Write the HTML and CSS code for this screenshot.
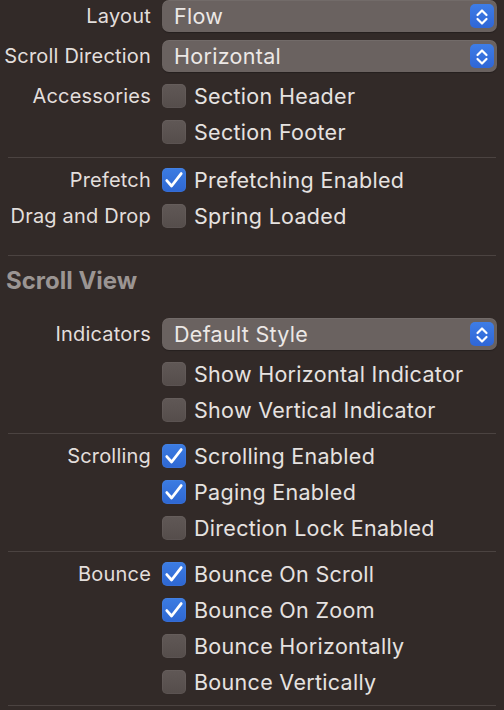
FILE: index.html
```html
<!DOCTYPE html>
<html>
<head>
<meta charset="utf-8">
<link rel="stylesheet" href="styles.css">
</head>
<body>
<div class="panel">
  <div class="row r-first">
    <div class="label">Layout</div>
    <div class="popup"><span class="popup-text">Flow</span><span class="stepper"><svg viewBox="0 0 24 24" width="24" height="24"><path d="M7.5 11 L12 6.5 L16.5 11 M7.5 15 L12 19.5 L16.5 15"/></svg></span></div>
  </div>
  <div class="row r-popup">
    <div class="label">Scroll Direction</div>
    <div class="popup"><span class="popup-text">Horizontal</span><span class="stepper"><svg viewBox="0 0 24 24" width="24" height="24"><path d="M7.5 11 L12 6.5 L16.5 11 M7.5 15 L12 19.5 L16.5 15"/></svg></span></div>
  </div>
  <div class="row r-cb">
    <div class="label">Accessories</div>
    <div class="check"><span class="box"></span><span>Section Header</span></div>
  </div>
  <div class="row r-cb">
    <div class="label"></div>
    <div class="check"><span class="box"></span><span>Section Footer</span></div>
  </div>
  <div class="sep s1"></div>
  <div class="row r-after-sep1">
    <div class="label">Prefetch</div>
    <div class="check"><span class="box on"><svg viewBox="0 0 24 24" width="24" height="24"><path d="M4.8 12.6 L9.6 18 L19.2 5.6"/></svg></span><span>Prefetching Enabled</span></div>
  </div>
  <div class="row r-cb">
    <div class="label">Drag and Drop</div>
    <div class="check"><span class="box"></span><span>Spring Loaded</span></div>
  </div>
  <div class="sep s2"></div>
  <div class="header">Scroll View</div>
  <div class="row r-after-header">
    <div class="label">Indicators</div>
    <div class="popup"><span class="popup-text">Default Style</span><span class="stepper"><svg viewBox="0 0 24 24" width="24" height="24"><path d="M7.5 11 L12 6.5 L16.5 11 M7.5 15 L12 19.5 L16.5 15"/></svg></span></div>
  </div>
  <div class="row r-cb">
    <div class="label"></div>
    <div class="check"><span class="box"></span><span>Show Horizontal Indicator</span></div>
  </div>
  <div class="row r-cb">
    <div class="label"></div>
    <div class="check"><span class="box"></span><span>Show Vertical Indicator</span></div>
  </div>
  <div class="sep s3"></div>
  <div class="row r-after-sep">
    <div class="label">Scrolling</div>
    <div class="check"><span class="box on"><svg viewBox="0 0 24 24" width="24" height="24"><path d="M4.8 12.6 L9.6 18 L19.2 5.6"/></svg></span><span>Scrolling Enabled</span></div>
  </div>
  <div class="row r-cb">
    <div class="label"></div>
    <div class="check"><span class="box on"><svg viewBox="0 0 24 24" width="24" height="24"><path d="M4.8 12.6 L9.6 18 L19.2 5.6"/></svg></span><span>Paging Enabled</span></div>
  </div>
  <div class="row r-cb">
    <div class="label"></div>
    <div class="check"><span class="box"></span><span>Direction Lock Enabled</span></div>
  </div>
  <div class="sep s3"></div>
  <div class="row r-after-sep">
    <div class="label">Bounce</div>
    <div class="check"><span class="box on"><svg viewBox="0 0 24 24" width="24" height="24"><path d="M4.8 12.6 L9.6 18 L19.2 5.6"/></svg></span><span>Bounce On Scroll</span></div>
  </div>
  <div class="row r-cb">
    <div class="label"></div>
    <div class="check"><span class="box on"><svg viewBox="0 0 24 24" width="24" height="24"><path d="M4.8 12.6 L9.6 18 L19.2 5.6"/></svg></span><span>Bounce On Zoom</span></div>
  </div>
  <div class="row r-cb">
    <div class="label"></div>
    <div class="check"><span class="box"></span><span>Bounce Horizontally</span></div>
  </div>
  <div class="row r-cb">
    <div class="label"></div>
    <div class="check"><span class="box"></span><span>Bounce Vertically</span></div>
  </div>
  <div class="sep s4"></div>
</div>
</body>
</html>
```

FILE: styles.css
```css
html, body {
  margin: 0;
  padding: 0;
  background: #322a28;
}
body {
  width: 504px;
  height: 710px;
  overflow: hidden;
  font-family: Inter, "Noto Sans", "Liberation Sans", sans-serif;
  font-size: 20px;
  color: #e6e2e0;
}
.panel {
  display: flex;
  flex-direction: column;
  padding-right: 7px;
}
.row {
  display: grid;
  grid-template-columns: 151px 1fr;
  column-gap: 11px;
  align-items: center;
}
.r-first { margin-top: 0; }
.r-popup { margin-top: 8px; }
.r-cb { margin-top: 12px; }
.r-after-sep1 { margin-top: 10px; }
.r-after-sep { margin-top: 10px; }
.r-after-header { margin-top: 21px; }
.label {
  text-align: right;
  white-space: nowrap;
  line-height: 24px;
  letter-spacing: 0.2px;
  color: #e2dedc;
}
.popup {
  position: relative;
  height: 32px;
  border-radius: 7px;
  background: #6a6260;
  box-shadow: inset 0 1px 0 rgba(255,255,255,0.06), 0 1px 1px rgba(0,0,0,0.25);
  display: flex;
  align-items: center;
  padding-left: 12px;
}
.popup-text {
  line-height: 32px;
  font-size: 21.5px;
  letter-spacing: 0.3px;
  color: #ece8e6;
}
.stepper {
  position: absolute;
  right: 3px;
  top: 4px;
  width: 24px;
  height: 24px;
  border-radius: 5px;
  background: linear-gradient(#3e7de6, #2f66d6);
}
.stepper svg, .box svg {
  display: block;
  fill: none;
  stroke: #fff;
  stroke-linecap: round;
  stroke-linejoin: round;
}
.stepper svg { stroke-width: 2.2; }
.box svg { stroke-width: 2.8; }
.check {
  display: flex;
  align-items: center;
  gap: 8px;
  height: 24px;
  white-space: nowrap;
  font-size: 21.5px;
  letter-spacing: 0.3px;
}
.box {
  width: 24px;
  height: 24px;
  border-radius: 5px;
  flex: none;
  background: linear-gradient(#605856, #554d4b);
  box-shadow: inset 0 0 0 1px rgba(255,255,255,0.04);
}
.box.on {
  background: linear-gradient(#3c7ce2, #2e67d2);
}
.sep {
  height: 1px;
  background: #4b4341;
  margin-left: 8px;
  margin-right: 1px;
}
.s1 { margin-top: 13px; }
.s2 { margin-top: 27px; }
.s3 { margin-top: 11px; }
.s4 { margin-top: 11px; }
.header {
  margin-top: 9px;
  height: 32px;
  line-height: 32px;
  padding-left: 6px;
  font-size: 24px;
  font-weight: 700;
  color: #9b9593;
}
```
